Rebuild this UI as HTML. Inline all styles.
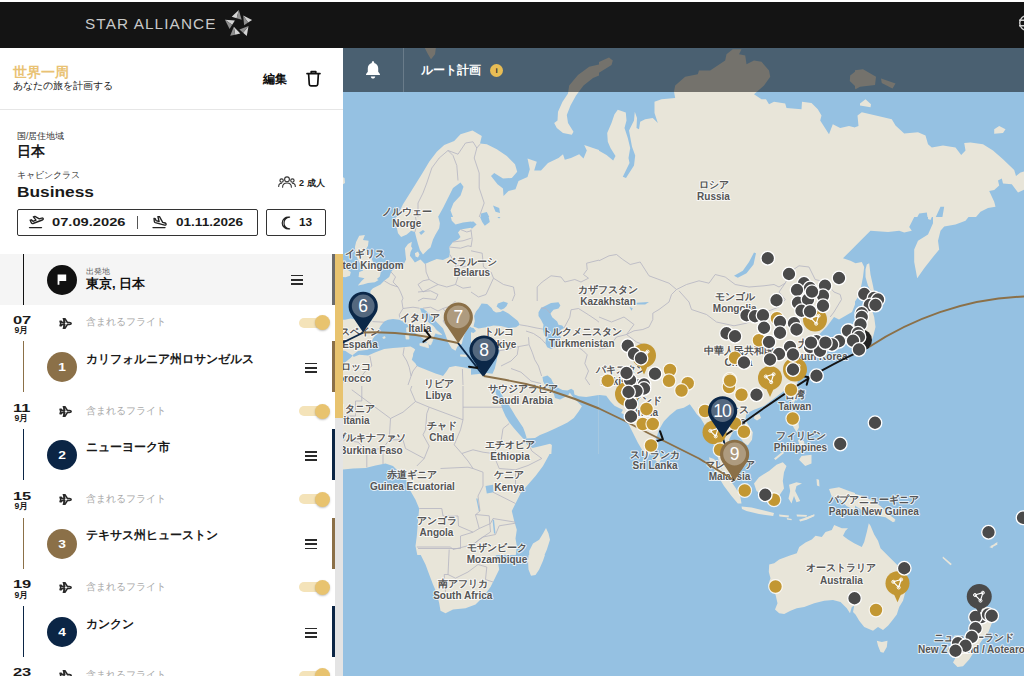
<!DOCTYPE html>
<html lang="ja"><head><meta charset="utf-8"><title>Star Alliance - Round the World</title>
<style>
*{box-sizing:border-box;margin:0;padding:0}
html,body{width:1024px;height:676px;overflow:hidden;background:#fff;font-family:"Liberation Sans",sans-serif;color:#1a1a1a}
.abs{position:absolute}
#hdr{position:absolute;left:0;top:2px;width:1024px;height:46.4px;background:#141414;z-index:5}
#brand{z-index:6;position:absolute;left:85px;top:16.2px;font-size:13.8px;line-height:17px;color:#c9c9c9;letter-spacing:1px;transform:scaleX(1.11);white-space:nowrap;transform-origin:0 50%}
#side{position:absolute;left:0;top:48px;width:343px;height:628px;background:#fff;overflow:hidden}
#map{position:absolute;left:343px;top:48px;width:681px;height:628px;overflow:hidden;background:#95c1e2}
#bar{position:absolute;left:343px;top:48px;width:681px;height:43.5px;background:rgba(0,0,0,.5)}
.b{font-weight:bold}
.t{position:absolute;white-space:nowrap;line-height:1}
.wide{display:inline-block;transform-origin:0 50%}
.row-line{position:absolute;left:23px;width:1px}
.rb{position:absolute;left:332px;width:3px}
.circ{position:absolute;left:47px;width:30px;height:30px;border-radius:15px;color:#fff;font-weight:bold;font-size:11px;text-align:center;line-height:30px}
.ham{position:absolute;width:12px;height:10px}
.ham i{position:absolute;left:0;width:12px;height:1.9px;background:#2a2a2a}
.tog{position:absolute;left:299px;width:27px;height:10px;border-radius:5px;background:#f4e3b9}
.knob{position:absolute;left:314.5px;width:15px;height:15px;border-radius:8px;background:#e8c36f;box-shadow:0 1px 2px rgba(0,0,0,.25)}
.fl{position:absolute;left:86px;font-size:10px;color:#a9a9a9;white-space:nowrap;line-height:1}
.dd{position:absolute;left:8px;width:28px;text-align:center;font-weight:bold;font-size:11px;line-height:1;white-space:nowrap}
.mm{position:absolute;left:7.5px;width:28px;text-align:center;font-weight:bold;font-size:8.6px;line-height:1;white-space:nowrap}
.city{position:absolute;left:86px;font-weight:bold;font-size:12px;white-space:nowrap;line-height:1}
.lb{font-weight:bold;fill:#555;stroke:rgba(255,255,255,.75);stroke-width:2px;stroke-linejoin:round;paint-order:stroke;text-anchor:middle;font-family:"Liberation Sans",sans-serif}
</style></head><body>
<div id="hdr"></div><div id="brand">STAR ALLIANCE</div><svg class="abs" style="left:0;top:0;z-index:6" width="300" height="48" viewBox="0 0 300 48"><path d="M238.8 9.9L231.7 16.7L236.7 18.2Z" fill="#d4d4d4"/><path d="M238.8 9.9L236.7 18.2L241.7 19.7Z" fill="#8e8e8e"/><path d="M243.2 15.5L252.1 20L248.1 22.6Z" fill="#d4d4d4"/><path d="M243.2 15.5L248.1 22.6L244.1 25.3Z" fill="#8e8e8e"/><path d="M248.5 25.9L246.8 36L243.1 32.7Z" fill="#d4d4d4"/><path d="M248.5 25.9L243.1 32.7L239.4 29.4Z" fill="#8e8e8e"/><path d="M233.8 26.8L240.3 33.6L235.2 34.7Z" fill="#d4d4d4"/><path d="M233.8 26.8L235.2 34.7L230.2 35.7Z" fill="#8e8e8e"/><path d="M224.9 19.7L234.9 20.6L232.2 24.8Z" fill="#d4d4d4"/><path d="M224.9 19.7L232.2 24.8L229.6 28.9Z" fill="#8e8e8e"/></svg><svg class="abs" style="left:1010px;top:10px;z-index:6" width="14" height="26" viewBox="1010 10 14 26"><g fill="none" stroke="#cfcfcf" stroke-width="1.4"><circle cx="1027" cy="23" r="7.3"/><path d="M1019 20.200h12M1019 25.800h12"/></g></svg>
<div id="map"><svg width="681" height="628" viewBox="343 48 681 628" style="position:absolute;left:0;top:0"><defs><clipPath id="c0"><rect x="343" y="48" width="256" height="169"/></clipPath><clipPath id="c1"><rect x="599" y="48" width="256" height="169"/></clipPath><clipPath id="c2"><rect x="855" y="48" width="169" height="169"/></clipPath><clipPath id="c3"><rect x="343" y="217" width="128" height="84"/></clipPath><clipPath id="c4"><rect x="471" y="217" width="128" height="84"/></clipPath><clipPath id="c5"><rect x="343" y="301" width="128" height="85"/></clipPath><clipPath id="c6"><rect x="471" y="301" width="128" height="85"/></clipPath><clipPath id="c7"><rect x="599" y="217" width="256" height="169"/></clipPath><clipPath id="c8"><rect x="855" y="217" width="169" height="169"/></clipPath><clipPath id="c9"><rect x="343" y="386" width="256" height="169"/></clipPath><clipPath id="c10"><rect x="470" y="386" width="129" height="68"/></clipPath><clipPath id="c11"><rect x="599" y="386" width="256" height="169"/></clipPath><clipPath id="c12"><rect x="855" y="386" width="169" height="169"/></clipPath><clipPath id="c13"><rect x="343" y="555" width="256" height="121"/></clipPath></defs><g clip-path="url(#c0)"><path fill="#e8e5d9" d="M396.8 220.5L396.8 217.0L403.0 204.2L408.5 195.5L415.5 184.2L422.5 173.0L429.2 161.8L436.8 151.8L444.2 145.0L454.2 141.0L460.5 134.2L472.5 130.5L481.8 136.0L480.0 143.5L486.8 144.2L496.8 149.2L506.8 156.0L515.0 164.2L517.2 171.8L511.8 178.0L503.0 178.5L494.2 173.0L491.0 176.0L497.5 184.2L503.0 188.5L503.5 196.0L508.5 191.0L515.5 189.2L518.5 181.0L527.5 177.0L529.8 169.2L527.5 158.5L536.8 161.8L534.2 170.5L541.0 170.5L548.0 163.0L558.5 158.0L563.0 154.2L564.8 159.8L571.0 158.0L579.2 154.2L583.5 158.5L586.8 150.5L584.2 145.0L593.0 148.0L600.5 150.5L600.5 220.5L453.0 220.5L453.0 217.0L450.5 210.5L453.5 203.0L460.5 195.5L463.5 186.8L460.5 182.5L453.0 188.0L448.0 198.0L443.0 208.0L438.0 217.0L438.0 220.5ZM600.5 64.2L589.2 66.8L578.0 75.0L569.2 85.5L568.0 93.5L562.5 101.8L558.0 111.8L557.5 120.5L554.2 123.0L556.8 128.0L563.0 133.0L571.8 134.8L573.5 131.8L568.0 123.0L566.8 115.0L570.5 105.5L576.0 95.5L583.5 85.5L593.0 78.0L600.5 75.0ZM424.2 46.8L436.0 46.8L435.0 54.2L431.0 59.2L428.0 54.2ZM341.8 176.8L344.5 178.0L345.0 183.0L341.8 185.0Z"/><path fill="#95c1e2" d="M480.0 220.5L481.0 213.5L486.8 212.0L491.0 220.5ZM493.0 205.5L499.2 208.0L500.0 213.0L495.5 211.8Z"/></g><g clip-path="url(#c1)"><path fill="#e8e5d9" d="M596.5 149.2L606.5 155.0L613.2 160.5L615.5 156.0L610.5 148.0L607.8 141.8L607.2 133.0L611.5 123.0L614.5 114.2L617.8 109.8L625.8 112.5L626.5 120.5L624.5 128.0L627.8 138.0L630.2 148.0L628.5 158.0L629.5 163.0L622.8 176.8L626.0 178.0L634.0 165.5L635.2 155.5L632.0 146.8L629.0 130.5L634.0 120.5L634.8 111.8L637.0 118.0L636.5 128.0L639.0 129.2L640.2 121.8L645.2 119.2L652.8 118.0L657.8 123.0L654.5 113.0L654.5 101.8L661.5 99.2L675.2 98.0L674.0 91.8L675.2 85.5L685.2 76.8L697.8 74.2L699.0 70.5L710.2 70.5L725.2 60.5L726.5 54.2L732.8 49.2L741.5 49.2L739.0 54.2L745.2 55.5L746.5 64.2L754.0 60.5L761.5 61.8L769.0 70.5L770.2 76.8L764.0 85.5L754.0 94.2L761.5 99.2L766.0 99.2L769.0 104.2L774.0 101.8L785.2 103.5L786.5 108.0L801.5 109.2L802.0 101.8L811.5 103.0L817.8 109.2L821.5 115.5L820.2 120.5L829.0 134.2L832.8 124.2L840.2 128.0L849.0 126.0L856.5 128.0L856.5 220.5L596.5 220.5ZM596.5 63.0L609.0 57.5L612.8 60.5L611.5 65.0L596.5 74.2ZM856.5 70.5L850.2 75.5L849.8 81.0L856.5 87.5Z"/></g><g clip-path="url(#c2)"><path fill="#e8e5d9" d="M765.5 105.5L773.0 101.8L785.5 103.5L786.8 109.2L801.8 110.5L802.2 101.8L813.0 103.5L819.2 110.5L821.0 115.5L819.8 120.5L829.2 134.2L833.0 124.2L840.5 128.0L845.5 126.0L851.8 128.5L858.5 126.0L857.5 115.5L861.8 112.2L878.0 116.0L891.8 119.2L895.5 125.5L904.2 133.5L918.0 132.2L925.5 135.5L928.0 144.2L931.8 147.5L943.0 145.5L955.5 147.5L961.2 155.0L965.5 150.5L964.2 143.0L970.5 142.5L983.0 144.2L993.0 150.5L1003.0 159.2L1014.2 170.0L1016.0 176.0L1020.5 172.5L1025.5 171.0L1025.5 189.2L1018.0 192.5L1011.8 184.2L1003.0 183.5L1001.8 178.5L998.0 180.5L999.2 185.5L994.2 190.0L989.2 191.0L994.2 201.8L995.5 206.8L988.0 208.0L980.5 211.8L973.0 220.5L941.8 220.5L944.2 206.8L940.5 206.8L934.2 220.5L928.0 220.5L926.8 212.5L919.2 213.5L915.5 220.5L765.5 220.5ZM994.2 129.2L999.2 126.0L1005.5 129.2L1003.0 133.0L994.2 133.8ZM850.5 78.0L853.0 70.5L863.0 69.2L876.0 76.8L875.0 85.0L860.0 86.8L855.5 89.2ZM881.0 78.5L895.5 83.5L892.5 88.5L881.8 83.0ZM860.0 103.5L865.5 99.2L871.0 104.2L870.5 107.2L860.0 105.5Z"/></g><g clip-path="url(#c3)"><path fill="#e8e5d9" d="M359.2 235.8L364.9 235.1L363.0 240.1L368.6 240.8L368.0 245.8L365.8 249.8L369.9 254.5L373.0 262.0L378.0 267.0L380.8 272.0L379.9 276.4L376.8 278.9L378.6 280.1L374.9 282.2L368.0 282.9L363.0 284.5L357.8 285.5L361.8 280.8L364.5 278.2L358.6 277.0L359.2 272.0L363.2 270.5L361.8 266.4L357.8 259.5L355.5 253.2L354.9 247.0L356.1 242.0ZM342.4 270.1L346.8 269.2L350.8 272.0L349.9 275.8L345.5 277.2L342.4 276.8ZM369.9 303.2L370.5 290.8L373.0 288.2L380.5 284.5L384.2 280.8L389.2 277.0L391.1 272.0L393.0 269.5L400.5 267.0L404.2 263.2L406.1 259.5L405.5 254.5L404.9 248.2L408.0 243.9L411.8 241.8L411.1 246.4L412.4 248.2L410.5 252.0L409.9 255.8L412.4 258.9L414.9 262.6L418.0 260.8L420.5 259.5L424.9 263.9L430.5 261.4L436.8 258.9L443.0 260.1L449.2 257.0L449.9 252.0L449.2 247.0L453.0 242.0L458.0 239.5L460.5 237.0L458.0 232.6L460.5 229.5L468.0 228.2L471.8 227.6L471.8 303.2ZM395.5 215.8L396.1 224.5L398.0 233.2L401.1 237.0L406.8 234.5L411.1 230.8L414.9 232.0L416.1 237.0L418.0 243.9L419.9 250.1L423.0 254.5L428.0 249.5L430.5 247.6L433.0 239.5L435.5 234.5L439.2 228.2L439.9 223.2L438.0 215.8ZM414.9 253.2L418.0 251.4L419.5 254.5L418.0 257.6L415.5 256.4ZM450.5 215.8L451.8 220.8L455.5 224.5L463.0 222.6L471.8 221.4L471.8 215.8Z"/><path fill="#95c1e2" d="M419.2 232.6L423.0 230.1L424.9 231.4L421.1 235.1Z"/></g><g clip-path="url(#c4)"><rect x="470" y="216" width="130" height="86" fill="#e8e5d9"/><path fill="#95c1e2" d="M470.4 221.8L473.5 221.4L476.6 224.5L472.2 228.5L470.4 228.0ZM479.8 216.4L488.5 216.4L489.8 222.0L484.8 225.8L482.2 222.0ZM496.6 216.4L501.0 216.4L499.1 218.5Z"/></g><g clip-path="url(#c5)"><rect x="342" y="300" width="130" height="87" fill="#e8e5d9"/><path fill="#95c1e2" d="M342.4 300.4L369.9 300.4L369.2 308.5L370.5 316.0L371.8 321.0L355.5 319.5L350.5 318.5L344.9 319.8L342.4 319.8ZM342.4 350.4L345.5 351.0L349.2 353.5L352.8 355.4L350.5 357.9L347.4 360.4L343.0 364.1L342.4 364.1ZM352.8 355.0L358.0 351.0L368.0 349.8L370.5 343.5L373.0 338.5L376.8 333.5L380.5 326.0L384.2 321.6L388.0 319.8L393.0 319.1L399.2 319.8L403.0 321.6L410.5 319.8L416.8 313.5L419.5 308.2L423.0 308.2L430.5 314.8L436.8 322.2L443.0 328.5L445.5 334.8L448.0 342.2L451.8 348.5L455.5 350.8L457.4 346.6L461.8 344.1L463.0 338.5L464.9 333.5L467.4 327.9L471.8 326.6L471.8 369.1L463.0 367.2L455.5 366.0L449.2 367.2L446.8 371.0L443.0 376.0L441.8 375.6L435.5 373.5L429.2 371.0L423.0 368.5L416.8 366.0L415.5 363.5L411.8 359.8L413.0 356.0L413.2 353.5L415.2 349.4L413.6 348.2L410.5 346.6L403.0 347.2L393.0 347.9L384.2 349.1L375.5 352.2L368.0 355.4L359.2 354.8L353.6 356.9Z"/><path fill="#e8e5d9" stroke="#e8e5d9" stroke-width="0.7" d="M403.0 321.6L407.4 324.1L411.1 329.1L416.8 333.8L423.6 338.5L428.0 342.9L429.9 345.0L430.8 344.8L432.4 341.0L433.6 336.6L435.5 332.9L438.0 334.1L441.8 334.5L436.1 330.0L433.6 326.6L427.0 321.6L423.0 316.0L421.1 312.2L419.5 308.2L416.8 313.5L410.5 319.8ZM419.9 343.5L428.0 342.9L428.6 347.9L424.2 346.6L419.9 345.4ZM405.5 334.1L408.6 333.8L409.0 339.1L406.1 339.1ZM406.5 327.9L408.2 327.5L408.5 332.2L406.8 332.2ZM460.5 354.8L466.8 355.1L466.5 356.6L460.5 356.2ZM382.8 337.2L384.9 336.6L385.2 338.1L383.2 338.5Z"/></g><g clip-path="url(#c6)"><rect x="470" y="300" width="130" height="87" fill="#e8e5d9"/><path fill="#95c1e2" d="M474.1 316.0L476.0 311.6L478.5 308.5L481.6 303.5L487.2 304.1L491.6 307.9L493.2 310.8L496.0 312.5L500.4 311.9L502.9 310.4L508.5 313.5L514.1 317.9L517.9 321.0L519.8 324.8L516.0 327.2L508.5 327.9L501.0 326.0L493.5 325.4L486.0 327.2L478.5 328.5L473.5 326.6L474.8 321.0ZM496.6 306.6L497.9 303.5L503.5 301.6L507.9 302.9L506.6 306.0L504.1 308.5L501.0 309.8L499.1 308.5ZM470.4 327.5L473.5 327.9L476.0 331.0L473.5 332.9L470.4 332.2ZM470.4 351.0L478.5 350.4L486.0 352.2L493.5 351.0L496.6 349.1L499.8 350.4L499.1 353.5L497.5 356.0L496.6 361.0L494.8 368.5L492.5 373.8L486.0 372.9L478.5 374.1L471.0 374.8L470.4 374.8ZM538.5 312.2L541.0 307.9L546.0 305.4L551.0 302.9L558.5 302.2L560.4 305.4L558.5 308.5L553.5 309.8L550.4 313.5L552.2 317.2L557.2 321.6L558.5 324.8L562.2 325.4L564.1 327.9L561.0 329.8L558.5 333.5L561.0 337.2L558.5 342.2L556.0 346.6L551.0 349.1L547.2 347.2L545.4 343.5L546.0 338.5L544.1 334.8L542.9 329.1L543.5 324.8L541.0 319.8L538.5 316.0ZM542.5 376.9L543.1 381.2L545.0 385.0L546.0 387.2L557.2 387.2L556.2 386.2L553.1 383.1L551.2 378.8L547.5 375.6Z"/></g><g clip-path="url(#c7)"><rect x="598" y="216" width="258" height="171" fill="#e8e5d9"/><path fill="#95c1e2" d="M734.0 275.8L742.8 270.8L749.0 262.0L754.0 252.5L756.0 253.2L753.5 264.5L746.5 273.2L737.8 277.8ZM636.5 302.8L649.0 302.0L645.2 304.5L636.5 304.5ZM629.5 307.0L632.8 308.2L631.5 310.8ZM856.5 245.0L855.5 245.8L848.0 253.2L843.0 258.2L850.5 260.8L855.5 263.2L856.5 263.5ZM856.5 300.8L852.0 312.0L839.0 319.5L834.0 317.0L826.5 327.0L819.0 334.5L814.0 342.0L809.0 349.5L805.2 359.5L799.0 372.0L796.5 389.5L856.5 389.5Z"/></g><g clip-path="url(#c8)"><path fill="#e8e5d9" d="M915.5 214.5L909.2 227.0L911.8 230.8L904.2 232.5L899.2 230.8L888.0 232.0L870.5 230.8L864.2 237.0L855.5 245.8L848.0 253.2L843.0 258.2L850.5 260.8L855.5 263.2L861.8 262.0L864.2 267.0L863.0 277.0L860.5 289.5L858.0 297.0L853.0 304.5L848.0 312.0L840.5 318.2L834.2 322.0L830.5 327.0L835.5 334.5L838.0 342.0L833.0 347.0L825.5 347.0L820.5 337.0L815.5 332.0L805.5 337.0L793.0 342.0L765.5 342.0L765.5 214.5ZM928.0 214.5L933.0 214.5L930.5 220.0L928.0 219.0ZM933.0 214.5L933.0 223.2L928.0 234.5L918.0 240.8L914.2 249.5L914.2 262.0L917.2 278.2L924.2 268.2L933.0 257.0L939.2 249.5L938.0 240.8L940.5 230.8L944.2 226.5L955.5 224.5L965.5 220.8L970.5 214.5ZM866.8 264.5L869.2 263.2L870.5 274.5L873.0 285.8L874.2 292.0L871.8 292.0L868.0 285.8L865.5 277.0L865.5 269.5ZM864.2 294.5L873.0 293.2L881.8 298.2L883.0 303.2L876.8 305.8L870.5 308.2L866.8 304.5L864.2 299.5ZM843.0 352.0L850.5 347.0L854.2 337.0L858.0 327.0L861.8 317.0L865.5 310.8L871.8 309.5L874.2 317.0L875.5 327.0L873.0 337.0L869.2 347.0L860.5 350.8L853.0 355.8L845.5 357.0ZM835.5 352.0L843.0 353.2L841.8 362.0L836.8 363.2Z"/></g><g clip-path="url(#c9)"><path fill="#e8e5d9" d="M340.5 383.5L493.0 383.5L494.2 388.5L499.2 396.0L503.0 403.5L506.8 411.0L513.0 418.5L518.0 426.0L523.0 434.8L525.5 439.8L533.0 444.8L540.5 446.0L551.8 444.8L549.2 454.8L543.0 466.0L535.5 476.0L526.8 486.0L520.5 493.5L515.5 503.5L511.8 511.0L514.2 521.0L516.8 529.8L515.5 538.5L516.8 546.0L515.5 558.5L418.0 558.5L415.5 546.0L416.8 536.0L418.0 521.0L419.2 508.5L415.5 499.8L410.5 491.0L405.5 478.5L399.2 472.2L393.0 466.0L385.5 463.5L375.5 465.5L365.5 468.0L353.0 468.5L340.5 469.8ZM499.2 383.5L503.0 391.0L509.2 404.8L515.5 414.8L521.8 423.5L526.8 429.8L528.5 434.8L540.5 428.5L555.5 423.5L568.0 417.2L578.0 411.0L582.2 404.8L578.0 397.2L573.0 392.2L569.2 393.5L565.5 391.0L560.5 386.0L558.0 383.5ZM575.5 383.5L579.2 389.8L590.5 392.2L600.5 391.5L600.5 383.5ZM546.0 528.0L548.5 533.5L550.0 539.8L546.8 549.8L543.0 558.5L529.2 558.5L529.2 551.0L533.0 543.5L539.2 539.8L543.0 533.5Z"/><path fill="#95c1e2" d="M485.5 486.0L493.0 484.8L493.5 492.2L486.8 493.5ZM476.2 498.5L477.5 498.5L480.0 511.0L478.8 511.0ZM492.5 519.8L494.0 519.8L495.5 533.5L494.0 533.5Z"/></g><g clip-path="url(#c10)"><rect x="469" y="385" width="131" height="70" fill="#e8e5d9"/><path fill="#95c1e2" d="M494.4 388.8L496.9 396.2L500.6 403.8L502.8 410.0L505.6 416.2L509.4 422.5L513.8 428.1L518.8 433.8L523.1 438.5L525.6 440.0L526.5 437.5L525.0 432.5L523.1 427.5L519.4 421.9L515.6 416.2L511.9 410.0L508.8 405.0L505.0 400.0L501.9 395.0L499.4 390.0L496.9 385.0ZM488.8 378.1L490.0 377.8L495.0 387.5L494.4 389.0ZM496.2 378.8L497.1 379.0L497.8 385.6L496.9 385.2ZM525.6 438.5L535.0 438.1L540.0 435.0L547.5 431.9L556.2 428.1L562.5 425.0L567.5 422.5L573.8 418.1L578.8 411.2L581.9 406.2L578.8 403.1L573.8 398.1L570.6 393.8L569.8 392.5L568.8 394.6L565.0 396.9L560.0 399.4L555.0 398.1L553.8 393.8L550.0 388.8L545.0 385.0L543.1 381.2L542.5 376.9L547.5 375.6L551.2 378.8L553.1 383.1L557.5 387.5L562.5 390.0L567.5 390.6L571.2 388.8L573.8 390.6L574.4 394.4L578.8 396.2L586.2 396.9L598.8 395.0L598.8 456.2L551.2 456.2L551.9 445.0L550.0 443.8L540.0 446.2L532.5 448.1L526.2 443.8L525.0 440.6Z"/></g><g clip-path="url(#c11)"><path fill="#e8e5d9" d="M596.5 383.5L596.5 395.0L599.8 395.0L606.2 395.8L610.5 401.5L614.5 405.8L619.5 408.2L623.0 409.8L621.2 413.0L625.5 415.0L628.0 423.0L633.0 433.0L638.0 443.0L643.5 452.2L648.0 456.5L652.8 448.5L657.0 436.0L659.0 429.8L663.8 421.5L669.5 415.5L676.8 409.5L683.8 407.8L689.8 404.2L694.5 410.8L696.8 414.2L700.5 418.0L704.0 423.8L706.2 429.8L709.0 432.2L714.0 446.0L719.0 461.0L724.0 473.5L730.2 478.5L736.0 481.0L739.0 473.5L734.0 461.0L730.2 448.5L729.0 439.8L732.8 432.2L737.8 427.2L739.0 436.0L744.0 443.0L747.8 445.5L752.0 439.8L752.8 432.2L749.0 426.0L745.2 419.8L746.5 413.5L754.0 409.8L764.0 406.0L774.0 398.5L784.0 391.0L789.0 383.5ZM656.0 453.0L659.5 454.0L661.0 459.8L658.5 463.5L655.5 460.5ZM709.0 457.2L714.0 459.0L721.5 468.5L729.0 478.5L735.2 487.2L740.2 496.0L741.5 503.5L737.8 503.5L731.5 496.0L724.0 486.0L716.5 473.5L710.2 463.5ZM741.5 506.5L751.5 507.5L764.0 510.5L774.0 513.0L773.2 516.0L759.0 514.0L746.5 511.0L742.0 509.0ZM779.0 514.5L789.0 515.5L788.5 517.5L779.5 516.5ZM796.5 514.5L807.0 515.0L806.5 516.8L797.0 516.5ZM799.0 519.8L806.5 517.2L814.5 514.2L813.5 516.5L806.5 519.8L800.2 521.5ZM754.0 483.5L759.0 477.2L769.0 471.0L776.5 464.8L782.8 462.2L786.5 466.0L784.0 472.2L782.8 481.0L784.0 488.5L779.0 496.0L774.0 499.8L764.0 496.0L756.5 491.0ZM789.0 484.8L796.5 482.2L802.0 483.5L796.5 486.0L795.2 491.0L800.2 501.0L796.5 502.2L794.0 496.0L791.5 503.5L788.5 498.5L790.2 491.0ZM792.8 416.0L797.8 417.2L799.0 427.2L796.5 432.2L792.8 426.0ZM801.5 456.0L811.5 454.8L811.5 463.5L805.2 466.0L799.0 459.8ZM797.8 439.8L804.0 441.0L805.2 448.5L800.2 447.2ZM774.0 458.5L782.8 451.5L784.0 453.0L775.5 460.0ZM791.5 393.5L795.0 392.2L796.0 398.5L793.5 403.5L791.0 399.8ZM754.5 415.5L759.5 414.0L761.0 418.0L757.0 420.5L754.0 418.5ZM816.5 479.0L819.0 479.8L819.5 486.5L817.0 485.5ZM829.0 489.0L839.0 487.2L849.0 491.0L856.5 493.5L856.5 511.0L846.5 506.0L839.0 498.5L831.5 496.0Z"/></g><g clip-path="url(#c12)"><path fill="#e8e5d9" d="M828.0 488.5L838.0 487.2L843.0 492.2L853.0 493.5L863.0 496.0L873.0 501.0L880.5 506.0L885.5 511.0L895.5 521.0L893.0 522.2L885.5 517.2L878.0 516.0L870.5 511.0L863.0 511.0L855.5 506.0L850.5 499.8L840.5 498.5L833.0 496.0L829.2 492.2ZM990.5 546.0L996.8 543.0L997.5 544.5L991.8 547.5Z"/></g><g clip-path="url(#c13)"><path fill="#e8e5d9" d="M419.2 504.5L418.0 517.0L416.8 532.0L416.8 544.5L420.5 554.5L425.5 564.5L429.2 574.5L433.0 584.5L436.8 593.2L439.2 603.2L440.5 610.8L445.5 613.2L453.0 609.5L465.5 608.2L475.5 604.5L483.0 597.0L490.5 587.0L495.5 577.0L499.2 569.5L498.0 562.0L495.5 555.8L503.0 550.8L510.5 544.5L515.5 538.2L516.2 530.8L515.5 522.0L513.0 514.5L510.5 504.5ZM546.0 528.2L548.5 533.2L550.0 539.5L546.8 549.5L543.0 560.8L539.2 569.5L535.5 575.0L531.0 575.8L528.5 569.5L528.0 560.8L529.2 550.8L533.0 543.2L539.2 539.5L543.0 533.2Z"/></g><path fill="#e8e5d9" d="M769.2 564.5L768.8 572.0L770.5 578.2L769.2 582.0L771.8 590.8L775.5 594.5L777.5 603.2L775.0 609.5L779.2 613.2L784.2 614.0L790.5 610.8L796.8 608.2L804.2 607.0L814.2 603.2L824.2 600.8L833.0 600.0L840.5 602.0L846.8 608.2L850.0 613.2L851.8 607.0L854.2 605.8L853.0 612.0L855.5 614.5L859.2 620.8L864.2 627.0L873.0 630.8L878.0 627.0L883.0 630.0L888.0 625.8L893.0 619.5L896.8 614.5L899.2 607.0L903.0 600.8L905.0 593.2L908.0 584.5L907.5 577.0L903.0 570.8L896.8 564.5L890.5 558.2L885.5 553.2L880.5 548.2L878.0 540.8L874.2 534.5L870.5 525.8L868.8 523.2L866.8 532.0L864.2 542.0L861.8 547.0L854.2 543.2L848.0 539.5L843.0 535.8L845.5 530.8L848.0 528.2L841.8 528.2L834.2 525.0L831.8 530.0L825.5 532.0L821.8 537.0L815.5 535.8L811.8 539.5L805.5 542.5L799.2 547.0L796.8 553.2L789.2 555.8L779.2 559.5L774.2 563.2ZM876.8 640.8L881.8 642.0L887.5 640.8L886.8 647.0L883.5 652.8L880.5 652.0L878.0 645.8ZM980.5 605.8L986.8 607.0L993.0 610.0L996.8 615.8L991.8 623.2L988.5 632.0L983.5 637.0L979.2 633.2L981.0 624.5L983.0 617.0ZM968.0 638.2L980.5 633.2L983.5 638.2L975.5 649.5L969.2 659.5L963.0 666.2L957.5 667.0L953.0 662.5L958.0 653.2L963.0 645.8ZM943.0 556.5L951.8 564.0L950.5 565.2L942.5 558.0ZM989.2 547.0L993.0 545.8L992.5 548.2ZM994.2 544.0L997.5 542.0L997.0 544.5ZM885.5 512.0L895.5 519.5L893.0 520.8L884.2 514.5ZM804.2 518.2L814.2 514.5L814.5 516.0L805.5 519.5ZM786.8 518.0L791.8 519.0L791.5 520.2L787.0 519.5Z"/><path d="M418.0 217.0L418.0 203.0L423.0 193.0L426.8 183.0L431.8 168.0L439.2 158.0L448.0 150.5L453.0 155.5M453.0 155.5L456.8 165.5L458.0 180.5M448.0 150.5L458.0 154.2L465.5 143.0L473.0 141.8L476.8 148.0L480.0 144.2M476.8 148.0L474.2 158.0L479.2 173.0L479.2 188.0L484.2 203.0L479.2 217.0M599.0 260.8L609.0 255.8L616.5 254.5L622.8 259.5L630.2 264.5L640.2 262.0L649.0 275.8L659.0 279.5L669.0 283.2L676.5 289.5M676.5 289.5L671.5 294.5L669.0 302.0L659.0 309.5L652.8 313.2L652.8 319.5L649.0 327.0L642.8 329.5L634.0 330.8L626.5 334.5M676.5 289.5L686.5 284.5L699.0 280.8L709.0 283.2L715.2 274.5L725.2 277.0L735.2 284.5L749.0 287.0L764.0 285.8L774.0 284.5L779.0 287.0L785.2 283.2M679.0 290.8L689.0 302.0L691.5 309.5L706.5 314.5L716.5 322.0L734.0 325.8L746.5 323.2L759.0 317.0L769.0 310.8L779.0 307.0L785.2 299.5L779.0 292.0L785.2 283.2M785.2 283.2L791.5 270.8L799.0 265.8L809.0 267.0L815.2 279.5L825.2 282.0L834.0 292.0L840.2 294.5L841.5 299.5L834.0 312.0L830.2 317.0M599.0 317.0L611.5 322.0L624.0 317.0L634.0 324.5L626.5 334.5L616.5 337.0L609.0 347.0L599.0 349.5M626.5 334.5L636.5 342.0L649.0 347.0L652.8 357.0L646.5 367.0M351.8 389.8L390.5 418.5M390.5 418.5L403.0 412.2L415.5 401.5L410.5 389.8L411.8 386.0M415.5 401.5L429.2 407.2L463.0 419.8L463.0 386.0M429.2 407.2L426.8 413.5L425.5 429.8L423.0 434.8L429.2 446.0L424.2 458.5L416.8 466.0M463.0 407.2L503.0 407.2M463.0 419.8L460.5 429.8L454.2 444.8L461.8 453.5L468.0 461.0L473.0 468.5L483.0 472.2M461.8 453.5L473.0 449.8L483.0 452.2L493.0 453.5L500.5 444.8L503.0 428.5L509.2 423.5M483.0 472.2L483.0 486.0L478.0 496.0L480.0 511.0L475.5 514.8L479.2 528.5L490.5 523.5L493.0 518.5M493.0 453.5L499.2 468.5L515.5 469.8L528.0 465.5L541.8 458.5L531.8 451.0L526.8 439.8M515.5 469.8L515.5 486.0L520.5 493.5M493.0 492.2L515.5 503.5M440.5 468.5L468.0 467.2L473.0 468.5M419.2 508.5L441.8 508.5L443.0 516.0L458.0 516.0L458.5 526.0L473.0 532.2M479.2 528.5L473.0 532.2L460.5 536.0L460.5 548.5L448.0 548.5L418.0 548.5M493.0 518.5L515.5 522.2M390.5 418.5L389.2 439.8L403.0 439.8L405.5 448.5L424.2 458.5M366.8 449.8L366.8 467.2M383.0 448.5L383.0 464.0M343.0 439.8L358.0 442.2L366.8 449.8L383.0 448.5L389.2 439.8M343.0 416.0L355.5 416.0L355.5 401.0L361.8 401.0L361.8 386.0M416.8 547.0L450.5 547.0L453.0 549.5L473.0 544.5M449.2 549.5L448.0 574.5L444.2 574.5L445.5 592.0M448.0 574.5L455.5 578.2L468.0 572.0L478.0 564.5L486.8 567.0L485.5 579.5L493.0 582.0M473.0 544.5L483.0 537.0L495.5 534.5L499.2 525.8L515.5 523.2M475.5 514.5L489.2 515.8L490.5 532.0L479.2 539.5L473.0 544.5M497.9 351.0L508.5 349.1L518.5 346.6L528.5 344.8M528.5 337.2L529.1 344.8L532.2 352.2L534.8 359.8L538.5 366.0L541.6 376.0M518.5 346.6L517.2 354.8L511.0 361.0L501.0 366.0M511.0 368.5L521.0 372.2L531.0 381.0L541.0 383.5M519.8 324.8L527.2 326.0L536.0 327.9L542.9 329.1M526.0 331.0L533.5 333.5L541.0 338.5L545.4 343.5M556.0 346.6L566.0 342.2L574.8 344.8L583.5 351.0L587.2 354.8M564.1 327.9L569.8 317.2L571.0 309.8L578.5 308.5L588.5 314.8L596.0 319.8L599.0 322.2M587.2 354.8L584.8 363.5L588.5 371.0L585.4 378.5L589.8 385.0M550.4 313.5L546.0 308.5L541.0 307.9M425.5 263.9L426.1 272.0L429.2 279.5M418.0 284.5L423.0 280.8L429.2 279.5L438.0 284.5L430.5 288.2L423.0 292.0L418.0 284.5M449.9 254.5L455.5 264.5L458.0 277.0L455.5 284.5M438.0 284.5L446.8 287.0L455.5 284.5L463.0 288.2L471.0 287.0M449.2 247.0L460.5 248.2L468.0 245.8L471.0 246.4M453.0 242.0L463.0 240.8L471.0 238.2M460.5 229.5L466.8 232.0L471.0 230.8M391.1 272.0L395.5 277.0L393.0 282.0L398.0 287.0L400.5 292.0L403.0 298.2L401.8 301.0M384.2 280.8L390.5 284.5L398.0 287.0M418.0 292.0L430.5 290.8L438.0 294.5L435.5 299.5L423.0 298.2L418.0 301.0M414.9 232.0L416.8 224.5L415.5 217.0M455.5 264.5L463.0 267.0L471.0 264.5M471.0 229.5L472.2 239.5L471.0 247.0M471.0 250.8L482.2 253.2L483.5 267.0L491.0 272.0L493.5 278.2L503.5 284.5L513.5 287.0L514.8 294.5L512.2 301.0M537.2 301.0L537.2 287.0L542.2 282.0L551.0 275.8L561.0 277.0L564.8 282.0L574.8 279.5L581.0 282.0L588.5 278.2L583.5 274.5L587.2 269.5L586.6 263.2L599.0 260.1M471.0 292.0L478.5 297.0L486.0 294.5L493.5 278.2M372.4 321.6L384.2 322.2M369.9 356.0L371.8 366.0L365.5 371.0L361.8 376.0L353.0 381.0L343.0 382.2M404.2 347.5L403.0 354.8L406.8 361.0L409.2 367.2L411.1 376.0L408.0 385.0M416.8 366.0L413.0 371.0L411.1 376.0M462.4 369.1L463.0 385.0M423.0 308.2L430.5 307.2L438.0 311.0L443.0 308.5L450.5 306.0L455.5 301.0M443.0 308.5L448.0 314.8L443.0 321.0L446.8 326.0L453.0 328.5L463.0 326.0M401.8 301.0L403.0 308.5L399.2 314.8L400.5 319.8M403.0 308.5L413.0 307.2L419.5 308.2" fill="none" stroke="#b4b4c2" stroke-width="0.8" stroke-linejoin="round"/><text class="lb" x="406.75" y="214.6" font-size="10.4">ノルウェー</text><text class="lb" x="406.75" y="227.4" font-size="10">Norge</text><text class="lb" x="365" y="256.6" font-size="10.4">イギリス</text><text class="lb" x="365" y="268.9" font-size="10">United Kingdom</text><text class="lb" x="471.75" y="264.6" font-size="10.4">ベラルーシ</text><text class="lb" x="471.75" y="276.0" font-size="10">Belarus</text><text class="lb" x="420" y="320.7" font-size="10.4">イタリア</text><text class="lb" x="420" y="331.9" font-size="10">Italia</text><text class="lb" x="360" y="335.1" font-size="10.4">スペイン</text><text class="lb" x="360" y="347.9" font-size="10">España</text><text class="lb" x="350.5" y="370.1" font-size="10.4">モロッコ</text><text class="lb" x="350.5" y="382.4" font-size="10">Morocco</text><text class="lb" x="498.5" y="335.1" font-size="10.4">トルコ</text><text class="lb" x="498.5" y="347.9" font-size="10">Türkiye</text><text class="lb" x="608" y="292.6" font-size="10.4">カザフスタン</text><text class="lb" x="608" y="305.4" font-size="10">Kazakhstan</text><text class="lb" x="581.75" y="335.1" font-size="10.4">トルクメニスタン</text><text class="lb" x="581.75" y="346.9" font-size="10">Türkmenistan</text><text class="lb" x="621" y="373.1" font-size="10.4">パキスタン</text><text class="lb" x="621" y="385.4" font-size="10">Pakistan</text><text class="lb" x="646.5" y="404.1" font-size="10.4">インド</text><text class="lb" x="646.5" y="415.9" font-size="10">India</text><text class="lb" x="713.5" y="188.1" font-size="10.4">ロシア</text><text class="lb" x="713.5" y="199.8" font-size="10">Russia</text><text class="lb" x="734.75" y="300.1" font-size="10.4">モンゴル</text><text class="lb" x="734.75" y="312.4" font-size="10">Mongolia</text><text class="lb" x="738.5" y="353.9" font-size="10.4">中華人民共和国</text><text class="lb" x="738.5" y="365.9" font-size="10">China</text><text class="lb" x="817.75" y="347.1" font-size="10.4">大韓民国</text><text class="lb" x="817.75" y="360.4" font-size="10">South Korea</text><text class="lb" x="794.75" y="397.6" font-size="10.4">台湾</text><text class="lb" x="794.75" y="409.9" font-size="10">Taiwan</text><text class="lb" x="800.5" y="439.1" font-size="10.4">フィリピン</text><text class="lb" x="800.5" y="450.9" font-size="10">Philippines</text><text class="lb" x="655" y="457.6" font-size="10.4">スリランカ</text><text class="lb" x="655" y="469.4" font-size="10">Sri Lanka</text><text class="lb" x="729.5" y="467.9" font-size="10.4">マレーシア</text><text class="lb" x="729.5" y="479.9" font-size="10">Malaysia</text><text class="lb" x="734" y="413.1" font-size="10.4">ラオス</text><text class="lb" x="734" y="424.9" font-size="10">Laos</text><text class="lb" x="873.75" y="502.9" font-size="10.4">パプアニューギニア</text><text class="lb" x="873.75" y="515.4" font-size="10">Papua New Guinea</text><text class="lb" x="841.4" y="571.4" font-size="10.4">オーストラリア</text><text class="lb" x="841.4" y="583.8" font-size="10">Australia</text><text class="lb" x="974.25" y="640.5" font-size="10.4">ニュージーランド</text><text class="lb" x="974.25" y="652.9" font-size="10">New Zealand / Aotearoa</text><text class="lb" x="438.6" y="386.6" font-size="10.4">リビア</text><text class="lb" x="438.6" y="399.4" font-size="10">Libya</text><text class="lb" x="522.5" y="391.6" font-size="10.4">サウジアラビア</text><text class="lb" x="522.5" y="403.8" font-size="10">Saudi Arabia</text><text class="lb" x="344.5" y="411.6" font-size="10.4">モーリタニア</text><text class="lb" x="344.5" y="423.8" font-size="10">Mauritania</text><text class="lb" x="371" y="441.4" font-size="10.4">ブルキナファソ</text><text class="lb" x="371" y="453.8" font-size="10">Burkina Faso</text><text class="lb" x="441.75" y="429.1" font-size="10.4">チャド</text><text class="lb" x="441.75" y="441.4" font-size="10">Chad</text><text class="lb" x="510" y="447.9" font-size="10.4">エチオピア</text><text class="lb" x="510" y="459.9" font-size="10">Ethiopia</text><text class="lb" x="412.4" y="477.9" font-size="10.4">赤道ギニア</text><text class="lb" x="412.4" y="490.0" font-size="10">Guinea Ecuatorial</text><text class="lb" x="509.25" y="478.1" font-size="10.4">ケニア</text><text class="lb" x="509.25" y="491.0" font-size="10">Kenya</text><text class="lb" x="436.5" y="524.1" font-size="10.4">アンゴラ</text><text class="lb" x="436.5" y="536.4" font-size="10">Angola</text><text class="lb" x="497" y="550.9" font-size="10.4">モザンビーク</text><text class="lb" x="497" y="563.4" font-size="10">Mozambique</text><text class="lb" x="462.75" y="586.9" font-size="10.4">南アフリカ</text><text class="lb" x="462.75" y="599.4" font-size="10">South Africa</text><path d="M343 342.5L363.5 332.5" stroke="#0b2748" stroke-width="1.9" fill="none"/><path d="M363.5 332.5C395 331 425 335 458 343" stroke="#8b7048" stroke-width="1.9" fill="none"/><path d="M458 343L483.7 376" stroke="#0b2748" stroke-width="1.9" fill="none"/><path d="M483.7 376L505 379.8L526 384L550 390.5L575 399L599 408.5L624 420.5L649 433.5L699 458.5L734.5 480.5" stroke-linejoin="round" stroke="#8b7048" stroke-width="1.9" fill="none"/><path d="M734.5 480.5L722.7 437" stroke="#0b2748" stroke-width="1.9" fill="none"/><path d="M722.7 437C745 422 790 388 823 369.800S860 352 869 347" stroke="#151515" stroke-width="1.9" fill="none"/><path d="M869 347C910 320 965 298 1026 296.5" stroke="#8b7048" stroke-width="1.9" fill="none"/><path d="M425.1 330.1L430.4 336.8L423.4 341.8" stroke="#111" stroke-width="2.0" fill="none" stroke-linecap="round" stroke-linejoin="round"/><path d="M478.3 359.5L477.5 368.0L469.0 366.7" stroke="#111" stroke-width="2.0" fill="none" stroke-linecap="round" stroke-linejoin="round"/><path d="M660.0 431.2L662.9 439.3L654.7 441.7" stroke="#111" stroke-width="2.0" fill="none" stroke-linecap="round" stroke-linejoin="round"/><path d="M801.0 375.7L808.6 377.2L806.7 384.7" stroke="#111" stroke-width="2.0" fill="none" stroke-linecap="round" stroke-linejoin="round"/><path d="M640 365.4L644 374.4L648 365.4Z" fill="#c29733"/><circle cx="644" cy="355.4" r="12" fill="#c29733"/><path d="M639.8 353.9L647.6 351.6L645.2 359.6Z" fill="none" stroke="#fff" stroke-width="1.15"/><circle cx="639.8" cy="353.9" r="1.5" fill="none" stroke="#fff" stroke-width="1"/><circle cx="647.6" cy="351.6" r="1.5" fill="none" stroke="#fff" stroke-width="1"/><circle cx="645.2" cy="359.6" r="1.5" fill="none" stroke="#fff" stroke-width="1"/><circle cx="815" cy="319.5" r="12" fill="#c29733"/><path d="M810.8 318.0L818.6 315.7L816.2 323.7Z" fill="none" stroke="#fff" stroke-width="1.15"/><circle cx="810.8" cy="318.0" r="1.5" fill="none" stroke="#fff" stroke-width="1"/><circle cx="818.6" cy="315.7" r="1.5" fill="none" stroke="#fff" stroke-width="1"/><circle cx="816.2" cy="323.7" r="1.5" fill="none" stroke="#fff" stroke-width="1"/><path d="M766 388L770 397L774 388Z" fill="#c29733"/><circle cx="770" cy="378" r="12" fill="#c29733"/><path d="M765.8 376.5L773.6 374.2L771.2 382.2Z" fill="none" stroke="#fff" stroke-width="1.15"/><circle cx="765.8" cy="376.5" r="1.5" fill="none" stroke="#fff" stroke-width="1"/><circle cx="773.6" cy="374.2" r="1.5" fill="none" stroke="#fff" stroke-width="1"/><circle cx="771.2" cy="382.2" r="1.5" fill="none" stroke="#fff" stroke-width="1"/><circle cx="795" cy="369.5" r="12" fill="#c29733"/><path d="M790.8 368.0L798.6 365.7L796.2 373.7Z" fill="none" stroke="#fff" stroke-width="1.15"/><circle cx="790.8" cy="368.0" r="1.5" fill="none" stroke="#fff" stroke-width="1"/><circle cx="798.6" cy="365.7" r="1.5" fill="none" stroke="#fff" stroke-width="1"/><circle cx="796.2" cy="373.7" r="1.5" fill="none" stroke="#fff" stroke-width="1"/><circle cx="714.5" cy="432.25" r="12" fill="#c29733"/><path d="M710.3 430.8L718.1 428.4L715.7 436.4Z" fill="none" stroke="#fff" stroke-width="1.15"/><circle cx="710.3" cy="430.8" r="1.5" fill="none" stroke="#fff" stroke-width="1"/><circle cx="718.1" cy="428.4" r="1.5" fill="none" stroke="#fff" stroke-width="1"/><circle cx="715.7" cy="436.4" r="1.5" fill="none" stroke="#fff" stroke-width="1"/><circle cx="627" cy="394" r="12" fill="#c29733"/><path d="M622.8 392.5L630.6 390.2L628.2 398.2Z" fill="none" stroke="#fff" stroke-width="1.15"/><circle cx="622.8" cy="392.5" r="1.5" fill="none" stroke="#fff" stroke-width="1"/><circle cx="630.6" cy="390.2" r="1.5" fill="none" stroke="#fff" stroke-width="1"/><circle cx="628.2" cy="398.2" r="1.5" fill="none" stroke="#fff" stroke-width="1"/><path d="M893.5 593.25L897.5 602.25L901.5 593.25Z" fill="#c29733"/><circle cx="897.5" cy="583.25" r="12" fill="#c29733"/><path d="M893.3 581.8L901.1 579.5L898.7 587.5Z" fill="none" stroke="#fff" stroke-width="1.15"/><circle cx="893.3" cy="581.8" r="1.5" fill="none" stroke="#fff" stroke-width="1"/><circle cx="901.1" cy="579.5" r="1.5" fill="none" stroke="#fff" stroke-width="1"/><circle cx="898.7" cy="587.5" r="1.5" fill="none" stroke="#fff" stroke-width="1"/><circle cx="759" cy="340.25" r="6.800" fill="#c29733" stroke="#fff" stroke-opacity=".85" stroke-width="1.2"/><circle cx="735" cy="357.75" r="6.800" fill="#c29733" stroke="#fff" stroke-opacity=".85" stroke-width="1.2"/><circle cx="777" cy="318.25" r="6.800" fill="#c29733" stroke="#fff" stroke-opacity=".85" stroke-width="1.2"/><circle cx="670" cy="370" r="6.800" fill="#c29733" stroke="#fff" stroke-opacity=".85" stroke-width="1.2"/><circle cx="669" cy="380.75" r="6.800" fill="#c29733" stroke="#fff" stroke-opacity=".85" stroke-width="1.2"/><circle cx="687.75" cy="383.25" r="6.800" fill="#c29733" stroke="#fff" stroke-opacity=".85" stroke-width="1.2"/><circle cx="729.75" cy="379.5" r="6.800" fill="#c29733" stroke="#fff" stroke-opacity=".85" stroke-width="1.2"/><circle cx="607.75" cy="380.75" r="6.800" fill="#c29733" stroke="#fff" stroke-opacity=".85" stroke-width="1.2"/><circle cx="681.5" cy="390.5" r="6.800" fill="#c29733" stroke="#fff" stroke-opacity=".85" stroke-width="1.2"/><circle cx="646.5" cy="409" r="6.800" fill="#c29733" stroke="#fff" stroke-opacity=".85" stroke-width="1.2"/><circle cx="642.75" cy="424" r="6.800" fill="#c29733" stroke="#fff" stroke-opacity=".85" stroke-width="1.2"/><circle cx="652.75" cy="424" r="6.800" fill="#c29733" stroke="#fff" stroke-opacity=".85" stroke-width="1.2"/><circle cx="651" cy="445.5" r="6.800" fill="#c29733" stroke="#fff" stroke-opacity=".85" stroke-width="1.2"/><circle cx="741.5" cy="394.75" r="6.800" fill="#c29733" stroke="#fff" stroke-opacity=".85" stroke-width="1.2"/><circle cx="705" cy="411" r="6.800" fill="#c29733" stroke="#fff" stroke-opacity=".85" stroke-width="1.2"/><circle cx="735" cy="423.5" r="6.800" fill="#c29733" stroke="#fff" stroke-opacity=".85" stroke-width="1.2"/><circle cx="744" cy="431.75" r="6.800" fill="#c29733" stroke="#fff" stroke-opacity=".85" stroke-width="1.2"/><circle cx="792.75" cy="418.5" r="6.800" fill="#c29733" stroke="#fff" stroke-opacity=".85" stroke-width="1.2"/><circle cx="744.75" cy="490.5" r="6.800" fill="#c29733" stroke="#fff" stroke-opacity=".85" stroke-width="1.2"/><circle cx="774" cy="499.75" r="6.800" fill="#c29733" stroke="#fff" stroke-opacity=".85" stroke-width="1.2"/><circle cx="720" cy="449.75" r="6.800" fill="#c29733" stroke="#fff" stroke-opacity=".85" stroke-width="1.2"/><circle cx="791" cy="389.75" r="6.800" fill="#c29733" stroke="#fff" stroke-opacity=".85" stroke-width="1.2"/><circle cx="729" cy="387" r="6.800" fill="#c29733" stroke="#fff" stroke-opacity=".85" stroke-width="1.2"/><circle cx="730" cy="380.6" r="6.800" fill="#c29733" stroke="#fff" stroke-opacity=".85" stroke-width="1.2"/><circle cx="775.5" cy="586.5" r="6.800" fill="#c29733" stroke="#fff" stroke-opacity=".85" stroke-width="1.2"/><circle cx="876" cy="610" r="6.800" fill="#c29733" stroke="#fff" stroke-opacity=".85" stroke-width="1.2"/><circle cx="861.5" cy="340" r="10.5" fill="#222"/><circle cx="767.75" cy="258.25" r="6.800" fill="#4a4a4a" stroke="#fff" stroke-width="1.300"/><circle cx="789" cy="274" r="6.800" fill="#4a4a4a" stroke="#fff" stroke-width="1.300"/><circle cx="804" cy="283.25" r="6.800" fill="#4a4a4a" stroke="#fff" stroke-width="1.300"/><circle cx="810" cy="288" r="6.800" fill="#4a4a4a" stroke="#fff" stroke-width="1.300"/><circle cx="797" cy="290" r="6.800" fill="#4a4a4a" stroke="#fff" stroke-width="1.300"/><circle cx="825" cy="285.75" r="6.800" fill="#4a4a4a" stroke="#fff" stroke-width="1.300"/><circle cx="839" cy="278" r="6.800" fill="#4a4a4a" stroke="#fff" stroke-width="1.300"/><circle cx="823" cy="295.75" r="6.800" fill="#4a4a4a" stroke="#fff" stroke-width="1.300"/><circle cx="798" cy="302.75" r="6.800" fill="#4a4a4a" stroke="#fff" stroke-width="1.300"/><circle cx="808" cy="299.5" r="6.800" fill="#4a4a4a" stroke="#fff" stroke-width="1.300"/><circle cx="823" cy="305.75" r="6.800" fill="#4a4a4a" stroke="#fff" stroke-width="1.300"/><circle cx="801.5" cy="310.75" r="6.800" fill="#4a4a4a" stroke="#fff" stroke-width="1.300"/><circle cx="810" cy="311.5" r="6.800" fill="#4a4a4a" stroke="#fff" stroke-width="1.300"/><circle cx="776.5" cy="300.25" r="6.800" fill="#4a4a4a" stroke="#fff" stroke-width="1.300"/><circle cx="746.5" cy="315.25" r="6.800" fill="#4a4a4a" stroke="#fff" stroke-width="1.300"/><circle cx="755" cy="316.25" r="6.800" fill="#4a4a4a" stroke="#fff" stroke-width="1.300"/><circle cx="763" cy="315.25" r="6.800" fill="#4a4a4a" stroke="#fff" stroke-width="1.300"/><circle cx="764" cy="327.75" r="6.800" fill="#4a4a4a" stroke="#fff" stroke-width="1.300"/><circle cx="780" cy="322" r="6.800" fill="#4a4a4a" stroke="#fff" stroke-width="1.300"/><circle cx="794" cy="323.25" r="6.800" fill="#4a4a4a" stroke="#fff" stroke-width="1.300"/><circle cx="796.5" cy="329.5" r="6.800" fill="#4a4a4a" stroke="#fff" stroke-width="1.300"/><circle cx="780" cy="332.75" r="6.800" fill="#4a4a4a" stroke="#fff" stroke-width="1.300"/><circle cx="726.5" cy="333.25" r="6.800" fill="#4a4a4a" stroke="#fff" stroke-width="1.300"/><circle cx="735" cy="336.25" r="6.800" fill="#4a4a4a" stroke="#fff" stroke-width="1.300"/><circle cx="769" cy="342" r="6.800" fill="#4a4a4a" stroke="#fff" stroke-width="1.300"/><circle cx="790" cy="347" r="6.800" fill="#4a4a4a" stroke="#fff" stroke-width="1.300"/><circle cx="779" cy="354" r="6.800" fill="#4a4a4a" stroke="#fff" stroke-width="1.300"/><circle cx="793" cy="354.5" r="6.800" fill="#4a4a4a" stroke="#fff" stroke-width="1.300"/><circle cx="770" cy="359.5" r="6.800" fill="#4a4a4a" stroke="#fff" stroke-width="1.300"/><circle cx="744" cy="362.5" r="6.800" fill="#4a4a4a" stroke="#fff" stroke-width="1.300"/><circle cx="793" cy="369.5" r="6.800" fill="#4a4a4a" stroke="#fff" stroke-width="1.300"/><circle cx="816.5" cy="375.75" r="6.800" fill="#4a4a4a" stroke="#fff" stroke-width="1.300"/><circle cx="816.5" cy="341.25" r="6.800" fill="#4a4a4a" stroke="#fff" stroke-width="1.300"/><circle cx="810" cy="347" r="6.800" fill="#4a4a4a" stroke="#fff" stroke-width="1.300"/><circle cx="820" cy="350.75" r="6.800" fill="#4a4a4a" stroke="#fff" stroke-width="1.300"/><circle cx="831.5" cy="344.5" r="6.800" fill="#4a4a4a" stroke="#fff" stroke-width="1.300"/><circle cx="839" cy="341.25" r="6.800" fill="#4a4a4a" stroke="#fff" stroke-width="1.300"/><circle cx="849" cy="330.75" r="6.800" fill="#4a4a4a" stroke="#fff" stroke-width="1.300"/><circle cx="627.75" cy="345.75" r="6.800" fill="#4a4a4a" stroke="#fff" stroke-width="1.300"/><circle cx="634" cy="354" r="6.800" fill="#4a4a4a" stroke="#fff" stroke-width="1.300"/><circle cx="641" cy="358.25" r="6.800" fill="#4a4a4a" stroke="#fff" stroke-width="1.300"/><circle cx="655" cy="373.75" r="6.800" fill="#4a4a4a" stroke="#fff" stroke-width="1.300"/><circle cx="630" cy="380" r="6.800" fill="#4a4a4a" stroke="#fff" stroke-width="1.300"/><circle cx="626.5" cy="373" r="6.800" fill="#4a4a4a" stroke="#fff" stroke-width="1.300"/><circle cx="644" cy="384.5" r="6.800" fill="#4a4a4a" stroke="#fff" stroke-width="1.300"/><circle cx="864.25" cy="294" r="6.800" fill="#4a4a4a" stroke="#fff" stroke-width="1.300"/><circle cx="874" cy="298" r="6.800" fill="#4a4a4a" stroke="#fff" stroke-width="1.300"/><circle cx="878" cy="299.5" r="6.800" fill="#4a4a4a" stroke="#fff" stroke-width="1.300"/><circle cx="869.75" cy="305" r="6.800" fill="#4a4a4a" stroke="#fff" stroke-width="1.300"/><circle cx="875.5" cy="305" r="6.800" fill="#4a4a4a" stroke="#fff" stroke-width="1.300"/><circle cx="861.75" cy="313.25" r="6.800" fill="#4a4a4a" stroke="#fff" stroke-width="1.300"/><circle cx="861.75" cy="317" r="6.800" fill="#4a4a4a" stroke="#fff" stroke-width="1.300"/><circle cx="860.5" cy="324.5" r="6.800" fill="#4a4a4a" stroke="#fff" stroke-width="1.300"/><circle cx="848" cy="330.75" r="6.800" fill="#4a4a4a" stroke="#fff" stroke-width="1.300"/><circle cx="858" cy="333.25" r="6.800" fill="#4a4a4a" stroke="#fff" stroke-width="1.300"/><circle cx="859" cy="337" r="6.800" fill="#4a4a4a" stroke="#fff" stroke-width="1.300"/><circle cx="853" cy="340.75" r="6.800" fill="#4a4a4a" stroke="#fff" stroke-width="1.300"/><circle cx="859" cy="349.5" r="6.800" fill="#4a4a4a" stroke="#fff" stroke-width="1.300"/><circle cx="832" cy="344.5" r="6.800" fill="#4a4a4a" stroke="#fff" stroke-width="1.300"/><circle cx="631" cy="404" r="6.800" fill="#4a4a4a" stroke="#fff" stroke-width="1.300"/><circle cx="631" cy="416.5" r="6.800" fill="#4a4a4a" stroke="#fff" stroke-width="1.300"/><circle cx="756.5" cy="394.75" r="6.800" fill="#4a4a4a" stroke="#fff" stroke-width="1.300"/><circle cx="765.25" cy="494.75" r="6.800" fill="#4a4a4a" stroke="#fff" stroke-width="1.300"/><circle cx="840.25" cy="444" r="6.800" fill="#4a4a4a" stroke="#fff" stroke-width="1.300"/><circle cx="644" cy="388.5" r="6.800" fill="#4a4a4a" stroke="#fff" stroke-width="1.300"/><circle cx="636.5" cy="391" r="6.800" fill="#4a4a4a" stroke="#fff" stroke-width="1.300"/><circle cx="628.5" cy="392" r="6.800" fill="#4a4a4a" stroke="#fff" stroke-width="1.300"/><circle cx="875" cy="422.75" r="6.800" fill="#4a4a4a" stroke="#fff" stroke-width="1.300"/><circle cx="988.5" cy="532.25" r="6.800" fill="#4a4a4a" stroke="#fff" stroke-width="1.300"/><circle cx="1023" cy="517.75" r="6.800" fill="#4a4a4a" stroke="#fff" stroke-width="1.300"/><circle cx="854.5" cy="598.25" r="6.800" fill="#4a4a4a" stroke="#fff" stroke-width="1.300"/><circle cx="904.25" cy="568.25" r="6.800" fill="#4a4a4a" stroke="#fff" stroke-width="1.300"/><circle cx="981.75" cy="617" r="6.800" fill="#4a4a4a" stroke="#fff" stroke-width="1.300"/><circle cx="975.5" cy="617" r="6.800" fill="#4a4a4a" stroke="#fff" stroke-width="1.300"/><circle cx="988" cy="614.5" r="6.800" fill="#4a4a4a" stroke="#fff" stroke-width="1.300"/><circle cx="991.75" cy="615.75" r="6.800" fill="#4a4a4a" stroke="#fff" stroke-width="1.300"/><circle cx="975.5" cy="628.25" r="6.800" fill="#4a4a4a" stroke="#fff" stroke-width="1.300"/><circle cx="971.75" cy="637" r="6.800" fill="#4a4a4a" stroke="#fff" stroke-width="1.300"/><circle cx="958" cy="643.25" r="6.800" fill="#4a4a4a" stroke="#fff" stroke-width="1.300"/><circle cx="965.5" cy="645.75" r="6.800" fill="#4a4a4a" stroke="#fff" stroke-width="1.300"/><circle cx="955.5" cy="650.75" r="6.800" fill="#4a4a4a" stroke="#fff" stroke-width="1.300"/><circle cx="825.4" cy="342.7" r="6.800" fill="#4a4a4a" stroke="#fff" stroke-width="1.300"/><circle cx="811" cy="342.7" r="6.800" fill="#4a4a4a" stroke="#fff" stroke-width="1.300"/><circle cx="812" cy="291.7" r="6.800" fill="#4a4a4a" stroke="#fff" stroke-width="1.300"/><path d="M975.25 606.5L979.25 614.5L983.25 606.5Z" fill="#4a4a4a"/><circle cx="979.25" cy="596.5" r="12.5" fill="#4a4a4a"/><path d="M975.0 595.0L982.9 592.7L980.5 600.7Z" fill="none" stroke="#fff" stroke-width="1.15"/><circle cx="975.0" cy="595.0" r="1.5" fill="none" stroke="#fff" stroke-width="1"/><circle cx="982.9" cy="592.7" r="1.5" fill="none" stroke="#fff" stroke-width="1"/><circle cx="980.5" cy="600.7" r="1.5" fill="none" stroke="#fff" stroke-width="1"/><path d="M363.2 332.5L351.08 314.44A14.6 14.6 0 1 1 375.32 314.44Z" fill="#0b2748"/><circle cx="363.2" cy="306.0" r="11.4" fill="#fff" fill-opacity=".3"/><text x="363.2" y="312.3" text-anchor="middle" font-size="17.5" fill="#fff" font-family="Liberation Sans, sans-serif">6</text><path d="M458.3 343.3L446.18 325.24A14.6 14.6 0 1 1 470.42 325.24Z" fill="#8b7048"/><circle cx="458.3" cy="316.8" r="11.4" fill="#fff" fill-opacity=".3"/><text x="458.3" y="323.1" text-anchor="middle" font-size="17.5" fill="#fff" font-family="Liberation Sans, sans-serif">7</text><path d="M484.0 376.2L471.88 358.14A14.6 14.6 0 1 1 496.12 358.14Z" fill="#0b2748"/><circle cx="484.0" cy="349.7" r="11.4" fill="#fff" fill-opacity=".3"/><text x="484.0" y="356.0" text-anchor="middle" font-size="17.5" fill="#fff" font-family="Liberation Sans, sans-serif">8</text><path d="M722.6 437.0L710.48 418.94A14.6 14.6 0 1 1 734.72 418.94Z" fill="#0b2748"/><circle cx="722.6" cy="410.5" r="11.4" fill="#fff" fill-opacity=".3"/><text x="722.1" y="416.8" text-anchor="middle" font-size="17.5" fill="#fff" font-family="Liberation Sans, sans-serif" letter-spacing="-1">10</text><path d="M734.6 480.5L722.48 462.44A14.6 14.6 0 1 1 746.72 462.44Z" fill="#8b7048"/><circle cx="734.6" cy="454.0" r="11.4" fill="#fff" fill-opacity=".3"/><text x="734.6" y="460.3" text-anchor="middle" font-size="17.5" fill="#fff" font-family="Liberation Sans, sans-serif">9</text></svg></div>
<div id="bar"></div><div class="abs" style="left:403px;top:48px;width:1px;height:43.5px;background:rgba(255,255,255,.18)"></div><svg class="abs" style="left:363.5px;top:60px" width="18" height="20" viewBox="0 0 18 20"><path d="M9 1.200c.7 0 1.200.5 1.200 1.200v.5c2.500.6 4 2.700 4 5.300v3.600l1.700 2.300c.3.5 0 1-.6 1H2.700c-.6 0-.9-.5-.6-1l1.700-2.300V8.200c0-2.600 1.500-4.700 4-5.300v-.5c0-.7.5-1.200 1.200-1.200z" fill="#fff"/><path d="M6.800 16.400h4.400c0 1.200-1 2.100-2.200 2.100s-2.200-.9-2.200-2.100z" fill="#fff"/></svg><div class="t b" style="left:420.5px;top:64px;font-size:12px;color:#fff">ルート計画</div><div class="abs" style="left:490px;top:63.5px;width:13px;height:13px;border-radius:7px;background:#e8bd55;color:#333;font-size:8px;font-weight:bold;text-align:center;line-height:13px">i</div>
<div id="side" style="top:0;height:676px;background:none">
<div class="abs" style="left:0;top:48px;width:343px;height:628px;background:#fff"></div>
<div class="t b" style="left:13px;top:66px;font-size:13.5px;color:#e9c274">世界一周</div>
<div class="t" style="left:13px;top:80.5px;font-size:10.2px;color:#222">あなたの旅を計画する</div>
<div class="t b" style="left:263px;top:72.5px;font-size:12px;color:#111">編集</div>
<svg class="abs" style="left:306px;top:70px" width="15" height="17" viewBox="0 0 15 17"><path d="M1 3.6h13M5.2 3.4V1.6h4.6v1.8M2.6 3.8l.7 10.6c.1.9.6 1.4 1.5 1.4h5.4c.9 0 1.4-.5 1.5-1.4l.7-10.6" fill="none" stroke="#111" stroke-width="1.7" stroke-linecap="round" stroke-linejoin="round"/></svg>
<div class="abs" style="left:0;top:109px;width:343px;height:1px;background:#e6e6e6"></div>
<div class="t" style="left:17px;top:131.5px;font-size:8.5px;color:#333">国/居住地域</div>
<div class="t b" style="left:17px;top:144.5px;font-size:13.5px;color:#1a1a1a">日本</div>
<div class="t" style="left:17px;top:171px;font-size:8.5px;color:#333">キャビンクラス</div>
<div class="t b" style="left:17px;top:184.6px;font-size:14px;color:#1a1a1a"><span class="wide" style="transform:scaleX(1.235)">Business</span></div>
<svg class="abs" style="left:278px;top:176px" width="18" height="12" viewBox="0 0 18 12"><g fill="none" stroke="#333" stroke-width="1.1" stroke-linecap="round"><circle cx="9" cy="3.3" r="2.4"/><path d="M4.6 11.2c0-2.6 2-4.2 4.4-4.2s4.4 1.6 4.4 4.2"/><circle cx="3.6" cy="4.6" r="1.7"/><path d="M.7 10.4c0-1.9 1.2-3.2 2.9-3.2"/><circle cx="14.4" cy="4.6" r="1.7"/><path d="M17.3 10.4c0-1.9-1.2-3.2-2.9-3.2"/></g></svg>
<div class="t b" style="left:299px;top:178.5px;font-size:9px;color:#222">2 成人</div>
<div class="abs" style="left:17px;top:208.5px;width:241px;height:27.5px;border:1px solid #333;border-radius:2px"></div>
<div class="abs" style="left:266px;top:208.5px;width:60px;height:27.5px;border:1px solid #333;border-radius:2px"></div>
<svg class="abs" style="left:28px;top:215px" width="16" height="14" viewBox="0 0 16 14"><g fill="none" stroke="#222" stroke-width="1.35" stroke-linecap="round" stroke-linejoin="round"><path d="M1.5 12.6h12"/><path d="M2.2 5.2l1.2-.4 1.6 1.5 3-1.1L5.4 1.9l1.5-.5 4.4 2.5 2.3-.8c.7-.3 1.4 0 1.6.5.2.6-.2 1.2-.9 1.4L5 8.5c-.6.2-1.300-.1-1.6-.6z"/></g></svg>
<div class="t b" style="left:52.3px;top:217.2px;font-size:11.3px;color:#1a1a1a"><span class="wide" style="transform:scaleX(1.3)">07.09.2026</span></div>
<div class="abs" style="left:137px;top:215.5px;width:1px;height:13px;background:#555"></div>
<svg class="abs" style="left:151px;top:215px" width="16" height="14" viewBox="0 0 16 14"><g fill="none" stroke="#222" stroke-width="1.35" stroke-linecap="round" stroke-linejoin="round"><path d="M2 12.6h12"/><path d="M3 3.4l1.2.2.8 2 3.100.9L6.900 1.600l1.600.1 3.200 5.700 2.400.6c.7.2 1.200.8 1 1.400-.1.6-.8.900-1.500.7L4.300 7.600c-.6-.2-1-.7-1-1.300z"/></g></svg>
<div class="t b" style="left:175.5px;top:217.2px;font-size:11.3px;color:#1a1a1a"><span class="wide" style="transform:scaleX(1.2)">01.11.2026</span></div>
<svg class="abs" style="left:281px;top:215.5px" width="13" height="14" viewBox="0 0 13 14"><path d="M8.6 1.2C5.200 1.600 3 4.100 3 7.100c0 3 2.200 5.400 5.600 5.800C4.500 13.600 1.200 10.800 1.200 7S4.500.5 8.600 1.200z" fill="none" stroke="#222" stroke-width="1.2" stroke-linejoin="round"/></svg>
<div class="t b" style="left:298.8px;top:217.2px;font-size:11.3px;color:#1a1a1a"><span class="wide" style="transform:scaleX(1.05)">13</span></div>
<div class="abs" style="left:0;top:254px;width:335px;height:51px;background:#f5f5f5"></div>
<div class="row-line" style="top:254px;height:51px;background:#111"></div>
<div class="rb" style="top:254px;height:51px;background:#6b6b6b"></div>
<div class="circ" style="top:264.5px;background:#111"></div>
<svg class="abs" style="left:56px;top:273px" width="12" height="13" viewBox="0 0 12 13"><path d="M1.600 1.600h8.600v6.400H3.400v3.800H1.600z" fill="#fff"/></svg>
<div class="t" style="left:86px;top:267.5px;font-size:8px;color:#666">出発地</div>
<div class="t b" style="left:86px;top:276.500px;font-size:13px;color:#111">東京, 日本</div>
<div class="ham" style="left:291px;top:274.5px"><i style="top:0"></i><i style="top:4.2px"></i><i style="top:8.4px"></i></div>
<div class="abs" style="left:335px;top:254px;width:8.4px;height:422px;background:#e4e4e4"></div>
<div class="abs" style="left:335px;top:254px;width:8.4px;height:164px;background:#e8c36f"></div>
<div class="dd" style="top:314.59999999999997px"><span class="wide" style="transform:scaleX(1.5);transform-origin:50% 50%">07</span></div>
<div class="mm" style="top:326.09999999999997px">9月</div>
<svg class="abs" style="left:58.5px;top:317.7px" width="13" height="11" viewBox="0 0 14 12"><path d="M13.2 6c0 .7-.9 1.1-1.9 1.1H9.1L6.2 11.4H4.7l1.5-4.3H3.4L2.3 8.5H1.1l.7-2.5-.7-2.5h1.2l1.1 1.4h2.8L4.7.6h1.5l2.9 4.3h2.2c1 0 1.9.4 1.9 1.1z" fill="#fff" stroke="#2a2a2a" stroke-width="1.7" stroke-linejoin="round"/><path d="M5.4 1.2v9.6" stroke="#2a2a2a" stroke-width="1.5"/></svg>
<div class="fl" style="top:317.4px">含まれるフライト</div>
<div class="tog" style="top:317.9px"></div><div class="knob" style="top:315.4px"></div>
<div class="row-line" style="top:341.0px;height:51px;background:#8b7048"></div>
<div class="rb" style="top:341.0px;height:51px;background:#8b7048"></div>
<div class="circ" style="top:352.0px;background:#8b7048"><span class="wide" style="transform:scaleX(1.25);transform-origin:50% 50%">1</span></div>
<div class="city" style="top:352.5px">カリフォルニア州ロサンゼルス</div>
<div class="ham" style="left:305px;top:362.5px"><i style="top:0"></i><i style="top:4.2px"></i><i style="top:8.4px"></i></div>
<div class="dd" style="top:402.74999999999994px"><span class="wide" style="transform:scaleX(1.5);transform-origin:50% 50%">11</span></div>
<div class="mm" style="top:414.24999999999994px">9月</div>
<svg class="abs" style="left:58.5px;top:405.84999999999997px" width="13" height="11" viewBox="0 0 14 12"><path d="M13.2 6c0 .7-.9 1.1-1.9 1.1H9.1L6.2 11.4H4.7l1.5-4.3H3.4L2.3 8.5H1.1l.7-2.5-.7-2.5h1.2l1.1 1.4h2.8L4.7.6h1.5l2.9 4.3h2.2c1 0 1.9.4 1.9 1.1z" fill="#fff" stroke="#2a2a2a" stroke-width="1.7" stroke-linejoin="round"/><path d="M5.4 1.2v9.6" stroke="#2a2a2a" stroke-width="1.5"/></svg>
<div class="fl" style="top:405.54999999999995px">含まれるフライト</div>
<div class="tog" style="top:406.04999999999995px"></div><div class="knob" style="top:403.54999999999995px"></div>
<div class="row-line" style="top:429.35px;height:51px;background:#0b2545"></div>
<div class="rb" style="top:429.35px;height:51px;background:#0b2545"></div>
<div class="circ" style="top:440.35px;background:#0b2545"><span class="wide" style="transform:scaleX(1.25);transform-origin:50% 50%">2</span></div>
<div class="city" style="top:440.85px">ニューヨーク市</div>
<div class="ham" style="left:305px;top:450.85px"><i style="top:0"></i><i style="top:4.2px"></i><i style="top:8.4px"></i></div>
<div class="dd" style="top:490.9px"><span class="wide" style="transform:scaleX(1.5);transform-origin:50% 50%">15</span></div>
<div class="mm" style="top:502.4px">9月</div>
<svg class="abs" style="left:58.5px;top:494.0px" width="13" height="11" viewBox="0 0 14 12"><path d="M13.2 6c0 .7-.9 1.1-1.9 1.1H9.1L6.2 11.4H4.7l1.5-4.3H3.4L2.3 8.5H1.1l.7-2.5-.7-2.5h1.2l1.1 1.4h2.8L4.7.6h1.5l2.9 4.3h2.2c1 0 1.9.4 1.9 1.1z" fill="#fff" stroke="#2a2a2a" stroke-width="1.7" stroke-linejoin="round"/><path d="M5.4 1.2v9.6" stroke="#2a2a2a" stroke-width="1.5"/></svg>
<div class="fl" style="top:493.7px">含まれるフライト</div>
<div class="tog" style="top:494.2px"></div><div class="knob" style="top:491.7px"></div>
<div class="row-line" style="top:517.7px;height:51px;background:#8b7048"></div>
<div class="rb" style="top:517.7px;height:51px;background:#8b7048"></div>
<div class="circ" style="top:528.7px;background:#8b7048"><span class="wide" style="transform:scaleX(1.25);transform-origin:50% 50%">3</span></div>
<div class="city" style="top:529.2px">テキサス州ヒューストン</div>
<div class="ham" style="left:305px;top:539.2px"><i style="top:0"></i><i style="top:4.2px"></i><i style="top:8.4px"></i></div>
<div class="dd" style="top:579.0500000000001px"><span class="wide" style="transform:scaleX(1.5);transform-origin:50% 50%">19</span></div>
<div class="mm" style="top:590.5500000000001px">9月</div>
<svg class="abs" style="left:58.5px;top:582.15px" width="13" height="11" viewBox="0 0 14 12"><path d="M13.2 6c0 .7-.9 1.1-1.9 1.1H9.1L6.2 11.4H4.7l1.5-4.3H3.4L2.3 8.5H1.1l.7-2.5-.7-2.5h1.2l1.1 1.4h2.8L4.7.6h1.5l2.9 4.3h2.2c1 0 1.9.4 1.9 1.1z" fill="#fff" stroke="#2a2a2a" stroke-width="1.7" stroke-linejoin="round"/><path d="M5.4 1.2v9.6" stroke="#2a2a2a" stroke-width="1.5"/></svg>
<div class="fl" style="top:581.85px">含まれるフライト</div>
<div class="tog" style="top:582.35px"></div><div class="knob" style="top:579.85px"></div>
<div class="row-line" style="top:606.05px;height:51px;background:#0b2545"></div>
<div class="rb" style="top:606.05px;height:51px;background:#0b2545"></div>
<div class="circ" style="top:617.05px;background:#0b2545"><span class="wide" style="transform:scaleX(1.25);transform-origin:50% 50%">4</span></div>
<div class="city" style="top:617.55px">カンクン</div>
<div class="ham" style="left:305px;top:627.55px"><i style="top:0"></i><i style="top:4.2px"></i><i style="top:8.4px"></i></div>
<div class="dd" style="top:667.2px"><span class="wide" style="transform:scaleX(1.5);transform-origin:50% 50%">23</span></div>
<div class="mm" style="top:678.7px">9月</div>
<svg class="abs" style="left:58.5px;top:670.3px" width="13" height="11" viewBox="0 0 14 12"><path d="M13.2 6c0 .7-.9 1.1-1.9 1.1H9.1L6.2 11.4H4.7l1.5-4.3H3.4L2.3 8.5H1.1l.7-2.5-.7-2.5h1.2l1.1 1.4h2.8L4.7.6h1.5l2.9 4.3h2.2c1 0 1.9.4 1.9 1.1z" fill="#fff" stroke="#2a2a2a" stroke-width="1.7" stroke-linejoin="round"/><path d="M5.4 1.2v9.6" stroke="#2a2a2a" stroke-width="1.5"/></svg>
<div class="fl" style="top:670.0px">含まれるフライト</div>
<div class="tog" style="top:670.5px"></div><div class="knob" style="top:668.0px"></div>
</div>

</body></html>
